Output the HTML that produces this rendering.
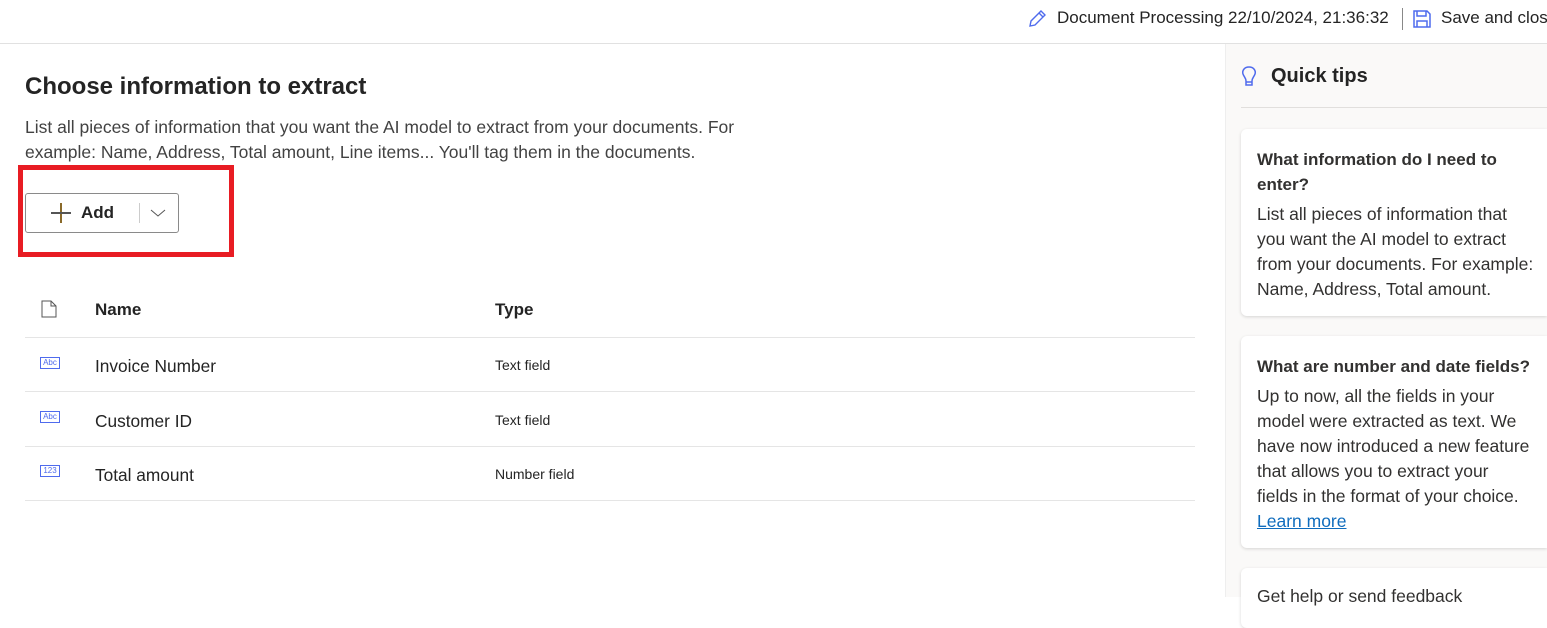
<!DOCTYPE html>
<html><head><style>
*{margin:0;padding:0;box-sizing:border-box}
body{width:1547px;height:597px;overflow:hidden;background:#fff;font-family:"Segoe UI","Liberation Sans",sans-serif;color:#242424;position:relative}
.abs{position:absolute;white-space:nowrap}
.top{position:absolute;left:0;top:0;width:1547px;height:44px;border-bottom:1px solid #e1e1e1}
.side{position:absolute;left:1225px;top:44px;width:322px;height:553px;background:#faf9f8;border-left:1px solid #eee}
.card{position:absolute;left:1241px;width:306px;background:#fff;border-radius:6px 0 0 6px;box-shadow:0 1px 3px rgba(0,0,0,.15);padding:18px 8px 17px 16px;font-size:17.5px;line-height:25px;color:#323130;white-space:nowrap}
.card b{font-weight:bold;font-size:17px;display:block;line-height:25px;margin-bottom:5px}
.line{position:absolute;left:25px;width:1170px;height:1px;background:#e5e5e5}
.ico{position:absolute;left:40px;width:20px;height:12px;border:1px solid #4f6bed;font-size:8px;color:#4f6bed;text-align:center;line-height:10px;font-family:"Liberation Sans",sans-serif}
</style></head><body>
<div class="top">
<svg class="abs" style="left:1026px;top:8px" width="22" height="22" viewBox="0 0 22 22"><path d="M4 18 L5 13 L15 3 L19 7 L9 17 Z M13 5 L17 9" fill="none" stroke="#4f6bed" stroke-width="1.4"/></svg>
<div class="abs" style="left:1057px;top:8px;font-size:17px">Document Processing 22/10/2024, 21:36:32</div>
<div class="abs" style="left:1402px;top:8px;width:1px;height:22px;background:#888"></div>
<svg class="abs" style="left:1412px;top:9px" width="20" height="20" viewBox="0 0 20 20"><path d="M2 2 H15 L18 5 V18 H2 Z M5 2 V7 H14 V2 M5 18 V12 H15 V18" fill="none" stroke="#4f6bed" stroke-width="1.5"/></svg>
<div class="abs" style="left:1441px;top:8px;font-size:17px">Save and close</div>
</div>
<div class="abs" style="left:25px;top:73px;font-size:24px;font-weight:600">Choose information to extract</div>
<div class="abs" style="left:25px;top:115px;font-size:17.5px;line-height:25px;color:#424242">List all pieces of information that you want the AI model to extract from your documents. For<br>example: Name, Address, Total amount, Line items... You'll tag them in the documents.</div>
<div class="abs" style="left:18px;top:165px;width:216px;height:92px;border:5px solid #e81c23"></div>
<div class="abs" style="left:25px;top:193px;width:154px;height:40px;border:1px solid #8a8a8a;border-radius:3px;background:#fff"></div>
<div class="abs" style="left:51px;top:203px;width:20px;height:20px"><div style="position:absolute;left:9px;top:0;width:1.5px;height:20px;background:#8a6a2a"></div><div style="position:absolute;left:0;top:9px;width:20px;height:1.5px;background:#555"></div></div>
<div class="abs" style="left:81px;top:203px;font-size:17px;font-weight:600">Add</div>
<div class="abs" style="left:139px;top:203px;width:1px;height:20px;background:#ccc"></div>
<svg class="abs" style="left:150px;top:208px" width="16" height="10"><path d="M1 2 L8 8 L15 2" fill="none" stroke="#555" stroke-width="1"/></svg>
<svg class="abs" style="left:41px;top:300px" width="16" height="18"><path d="M1 1 H10 L15 6 V17 H1 Z M10 1 V6 H15" fill="none" stroke="#555" stroke-width="1"/></svg>
<div class="abs" style="left:95px;top:300px;font-size:17px;font-weight:600">Name</div>
<div class="abs" style="left:495px;top:300px;font-size:17px;font-weight:600">Type</div>
<div class="line" style="top:337px"></div>
<div class="line" style="top:391px"></div>
<div class="line" style="top:446px"></div>
<div class="line" style="top:500px"></div>
<div class="ico" style="top:357px">Abc</div>
<div class="ico" style="top:411px">Abc</div>
<div class="ico" style="top:465px">123</div>
<div class="abs" style="left:95px;top:356px;font-size:17.3px">Invoice Number</div>
<div class="abs" style="left:95px;top:411px;font-size:17.3px">Customer ID</div>
<div class="abs" style="left:95px;top:465px;font-size:17.3px">Total amount</div>
<div class="abs" style="left:495px;top:357px;font-size:14px">Text field</div>
<div class="abs" style="left:495px;top:412px;font-size:14px">Text field</div>
<div class="abs" style="left:495px;top:466px;font-size:14px">Number field</div>
<div class="side"></div>
<svg class="abs" style="left:1240px;top:65px" width="18" height="24" viewBox="0 0 18 24"><path d="M9 2 C4 2 2 6 3 9 C4 12 6 13 6 16 V20 H12 V16 C12 13 14 12 15 9 C16 6 14 2 9 2 Z M6 17 H12" fill="none" stroke="#4f6bed" stroke-width="1.5"/></svg>
<div class="abs" style="left:1271px;top:65px;font-size:20px;font-weight:600">Quick tips</div>
<div class="abs" style="left:1241px;top:107px;width:306px;height:1px;background:#e1dfdd"></div>
<div class="card" style="top:129px;height:187px"><b>What information do I need to<br>enter?</b>List all pieces of information that<br>you want the AI model to extract<br>from your documents. For example:<br>Name, Address, Total amount.</div>
<div class="card" style="top:336px;height:212px"><b>What are number and date fields?</b>Up to now, all the fields in your<br>model were extracted as text. We<br>have now introduced a new feature<br>that allows you to extract your<br>fields in the format of your choice.<br><span style="color:#0f6cbd;text-decoration:underline">Learn more</span></div>
<div class="card" style="top:568px;height:60px;padding-top:16px"><b style="font-weight:normal;font-size:17.5px">Get help or send feedback</b></div>
</body></html>
